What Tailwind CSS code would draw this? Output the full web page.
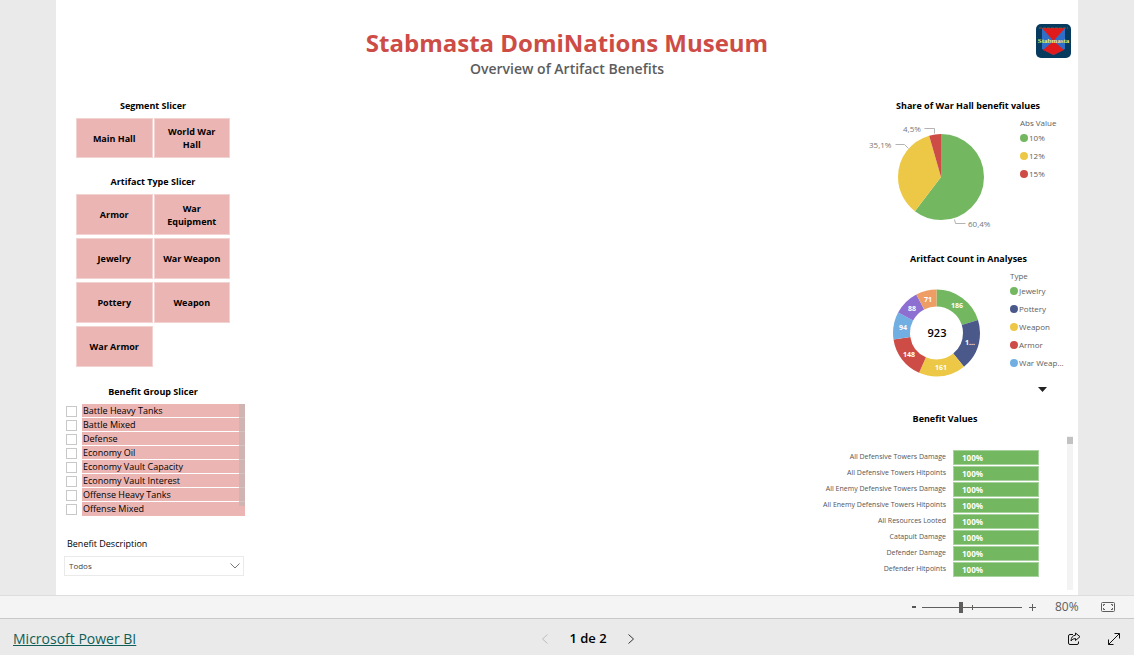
<!DOCTYPE html>
<html lang="en">
<head>
<meta charset="utf-8">
<title>Stabmasta DomiNations Museum</title>
<script src="https://cdn.jsdelivr.net/npm/@tailwindcss/browser@4"></script>
</head>
<body class="flex min-h-screen flex-col bg-[#eaeaea] font-['Open_Sans','Noto_Sans',sans-serif] text-black">

<main class="mx-14 flex flex-1 flex-col bg-white">
  <header class="relative pt-7 text-center">
    <h1 class="text-[24px] leading-[30px] font-bold text-[#cd4c46]">Stabmasta DomiNations Museum</h1>
    <p class="mt-[3px] text-[14px] leading-4 font-semibold text-[#5c5c5c]">Overview of Artifact Benefits</p>
    <svg class="absolute top-6 right-[7px] h-[34px] w-[35px]" viewBox="0 0 35 34" role="img" aria-label="Stabmasta logo">
      <rect width="35" height="34" rx="5" fill="#063a5f"/>
      <path d="M6 4H29V25L17.500 31L6 25Z" fill="#2f6fc8"/>
      <path d="M6 4H29L17.500 17Z" fill="#e01a1a"/>
      <path d="M17.500 17L28 26L17.500 31L7 26Z" fill="#e01a1a"/>
      <path d="M3 4H32" stroke="#7b5a35" stroke-dasharray="3 1"/>
      <text x="17.500" y="19" text-anchor="middle" font-family="Liberation Serif, serif" font-weight="bold" font-size="7" fill="#f3ea6b">Stabmasta</text>
    </svg>
  </header>

  <div class="flex flex-1 justify-between pt-[21px]">
    <aside class="ml-2 w-[180px]">
      <section>
        <h2 class="pr-[2px] text-center text-[9px] leading-4 font-bold">Segment Slicer</h2>
        <div class="mr-[14px] ml-3 mt-1 grid grid-cols-2 gap-x-px gap-y-[3px] text-[9px] leading-[13px] font-bold">
          <button class="h-10 border border-[#f3d3d2] bg-[#eab5b3] px-3">Main Hall</button>
          <button class="h-10 border border-[#f3d3d2] bg-[#eab5b3] px-3">World War Hall</button>
        </div>
      </section>
      <section class="mt-4">
        <h2 class="pr-[2px] text-center text-[9px] leading-4 font-bold">Artifact Type Slicer</h2>
        <div class="mr-[14px] ml-3 mt-1 grid grid-cols-2 gap-x-px gap-y-[3px] text-[9px] leading-[13px] font-bold">
          <button class="h-[41px] border border-[#f3d3d2] bg-[#eab5b3] px-1">Armor</button>
          <button class="h-[41px] border border-[#f3d3d2] bg-[#eab5b3] px-1">War<br>Equipment</button>
          <button class="h-[41px] border border-[#f3d3d2] bg-[#eab5b3] px-1">Jewelry</button>
          <button class="h-[41px] border border-[#f3d3d2] bg-[#eab5b3] px-1">War Weapon</button>
          <button class="h-[41px] border border-[#f3d3d2] bg-[#eab5b3] px-1">Pottery</button>
          <button class="h-[41px] border border-[#f3d3d2] bg-[#eab5b3] px-1">Weapon</button>
          <button class="h-[41px] border border-[#f3d3d2] bg-[#eab5b3] px-1">War Armor</button>
        </div>
      </section>
      <section class="mt-[17px]">
        <h2 class="pr-[2px] text-center text-[9px] leading-4 font-bold">Benefit Group Slicer</h2>
        <div class="relative mt-1 -mr-px text-[9px] leading-[14px]">
          <label class="flex h-[14px] items-center gap-[5px] pl-[2px]"><input type="checkbox" class="size-[11px] appearance-none border border-[#c8c8c8] bg-white"><span class="flex-1 border-b border-white bg-[#eab5b3] h-[14px] pl-px">Battle Heavy Tanks</span></label>
          <label class="flex h-[14px] items-center gap-[5px] pl-[2px]"><input type="checkbox" class="size-[11px] appearance-none border border-[#c8c8c8] bg-white"><span class="flex-1 border-b border-white bg-[#eab5b3] h-[14px] pl-px">Battle Mixed</span></label>
          <label class="flex h-[14px] items-center gap-[5px] pl-[2px]"><input type="checkbox" class="size-[11px] appearance-none border border-[#c8c8c8] bg-white"><span class="flex-1 border-b border-white bg-[#eab5b3] h-[14px] pl-px">Defense</span></label>
          <label class="flex h-[14px] items-center gap-[5px] pl-[2px]"><input type="checkbox" class="size-[11px] appearance-none border border-[#c8c8c8] bg-white"><span class="flex-1 border-b border-white bg-[#eab5b3] h-[14px] pl-px">Economy Oil</span></label>
          <label class="flex h-[14px] items-center gap-[5px] pl-[2px]"><input type="checkbox" class="size-[11px] appearance-none border border-[#c8c8c8] bg-white"><span class="flex-1 border-b border-white bg-[#eab5b3] h-[14px] pl-px">Economy Vault Capacity</span></label>
          <label class="flex h-[14px] items-center gap-[5px] pl-[2px]"><input type="checkbox" class="size-[11px] appearance-none border border-[#c8c8c8] bg-white"><span class="flex-1 border-b border-white bg-[#eab5b3] h-[14px] pl-px">Economy Vault Interest</span></label>
          <label class="flex h-[14px] items-center gap-[5px] pl-[2px]"><input type="checkbox" class="size-[11px] appearance-none border border-[#c8c8c8] bg-white"><span class="flex-1 border-b border-white bg-[#eab5b3] h-[14px] pl-px">Offense Heavy Tanks</span></label>
          <label class="flex h-[14px] items-center gap-[5px] pl-[2px]"><input type="checkbox" class="size-[11px] appearance-none border border-[#c8c8c8] bg-white"><span class="flex-1 bg-[#eab5b3] h-[14px] pl-px">Offense Mixed</span></label>
          <div class="absolute top-0 right-0 h-[102px] w-[6px] bg-[#c8b4b2]/80"></div>
        </div>
      </section>
      <section class="mt-5">
        <label for="benefit" class="block pl-[3px] text-[9px] leading-4">Benefit Description</label>
        <div class="relative mt-1">
          <select id="benefit" class="block h-5 w-full appearance-none border border-[#eaeaea] bg-white pl-1 text-[8px] text-[#444]"><option>Todos</option></select>
          <svg class="pointer-events-none absolute top-[7px] right-1 h-[6px] w-[10px]" viewBox="0 0 10 6" fill="none" stroke="#777"><path d="M.5 .5L5 5L9.500 .5"/></svg>
        </div>
      </section>
    </aside>

    <aside class="w-[264px]">
      <section class="pl-[46px]">
        <h2 class="pr-[2px] text-center text-[9px] leading-4 font-bold">Share of War Hall benefit values</h2>
        <div class="mt-1 flex gap-[10px]">
          <svg class="h-[120px] w-[150px]" viewBox="0 0 150 120" role="img" aria-label="Pie chart of War Hall benefit values">
            <g fill="none" stroke-width="43" transform="rotate(-90 81 59)">
              <circle cx="81" cy="59" r="21.500" stroke="#73b761" pathLength="1000" stroke-dasharray="604 396"/>
              <circle cx="81" cy="59" r="21.500" stroke="#ecc846" pathLength="1000" stroke-dasharray="351 649" stroke-dashoffset="-604"/>
              <circle cx="81" cy="59" r="21.500" stroke="#cd4c46" pathLength="1000" stroke-dasharray="45 955" stroke-dashoffset="-955"/>
            </g>
            <g fill="none" stroke="#b3b3b3"><path d="M64.500 10.500H74.500V15.500"/><path d="M35.500 26.500H44.500L48.500 30.500"/><path d="M94.500 101.500L95.500 105.500H105.500"/></g>
            <g font-size="8" fill="#777"><text x="43" y="14">4,5%</text><text x="9" y="30">35,1%</text><text x="108" y="109">60,4%</text></g>
          </svg>
          <div class="text-[8px] leading-[18px] text-[#605e5c]">
            <h3 class="leading-[10px]">Abs Value</h3>
            <ul class="mt-px">
              <li class="flex items-center gap-px"><span class="size-2 rounded-full bg-[#73b761]"></span>10%</li>
              <li class="flex items-center gap-px"><span class="size-2 rounded-full bg-[#ecc846]"></span>12%</li>
              <li class="flex items-center gap-px"><span class="size-2 rounded-full bg-[#cd4c46]"></span>15%</li>
            </ul>
          </div>
        </div>
      </section>

      <section class="mt-[13px] pl-[46px]">
        <h2 class="pr-px text-center text-[9px] leading-4 font-bold">Aritfact Count in Analyses</h2>
        <div class="mt-1 flex">
          <svg class="h-[124px] w-[150px]" viewBox="0 0 150 124" role="img" aria-label="Donut chart of artifact count by type">
            <g fill="none" stroke-width="17" transform="rotate(-90 76.500 62)">
              <circle cx="76.500" cy="62" r="35" stroke="#73b761" pathLength="923" stroke-dasharray="186 737"/>
              <circle cx="76.500" cy="62" r="35" stroke="#4a588a" pathLength="923" stroke-dasharray="175 748" stroke-dashoffset="-186"/>
              <circle cx="76.500" cy="62" r="35" stroke="#ecc846" pathLength="923" stroke-dasharray="161 762" stroke-dashoffset="-361"/>
              <circle cx="76.500" cy="62" r="35" stroke="#cd4c46" pathLength="923" stroke-dasharray="148 775" stroke-dashoffset="-522"/>
              <circle cx="76.500" cy="62" r="35" stroke="#71afe2" pathLength="923" stroke-dasharray="94 829" stroke-dashoffset="-670"/>
              <circle cx="76.500" cy="62" r="35" stroke="#8d6fd1" pathLength="923" stroke-dasharray="88 835" stroke-dashoffset="-764"/>
              <circle cx="76.500" cy="62" r="35" stroke="#ee9e64" pathLength="923" stroke-dasharray="71 852" stroke-dashoffset="-852"/>
            </g>
            <g font-size="7" font-weight="bold" fill="#fff" text-anchor="middle">
              <text x="97" y="37">186</text><text x="110" y="74">1...</text><text x="81" y="99">161</text><text x="49" y="86">148</text><text x="43" y="59">94</text><text x="52" y="40">88</text><text x="68" y="31">71</text>
            </g>
            <text x="77" y="66" font-size="11" font-weight="600" text-anchor="middle">923</text>
          </svg>
          <div class="text-[8px] leading-[18px] text-[#605e5c]">
            <h3 class="leading-[10px]">Type</h3>
            <ul class="mt-px">
              <li class="flex items-center gap-px"><span class="size-2 rounded-full bg-[#73b761]"></span>Jewelry</li>
              <li class="flex items-center gap-px"><span class="size-2 rounded-full bg-[#4a588a]"></span>Pottery</li>
              <li class="flex items-center gap-px"><span class="size-2 rounded-full bg-[#ecc846]"></span>Weapon</li>
              <li class="flex items-center gap-px"><span class="size-2 rounded-full bg-[#cd4c46]"></span>Armor</li>
              <li class="flex items-center gap-px"><span class="size-2 rounded-full bg-[#71afe2]"></span>War Weap...</li>
            </ul>
            <button aria-label="More types" class="mt-1 ml-7 block h-[18px]"><svg class="mt-2 h-[5px] w-[9px]" viewBox="0 0 9 5"><path d="M0 0H9L4.500 5Z" fill="#222"/></svg></button>
          </div>
        </div>
      </section>

      <section class="mt-4">
        <h2 class="pr-[2px] text-center text-[9px] leading-4 font-bold">Benefit Values</h2>
        <div class="mt-[9px] flex h-[154px]">
          <table class="mt-[13px] h-[128px] w-[225px] border-collapse text-[7px] leading-[14px]">
            <tbody>
              <tr class="h-4"><th class="p-0 pr-[7px] text-right font-normal whitespace-nowrap text-[#555]">All Defensive Towers Damage</th><td class="w-[86px] p-0"><div class="h-[15px] border border-[#a9d39e] bg-[#73b761] pl-2 text-[8px] font-bold text-white">100%</div></td></tr>
              <tr class="h-4"><th class="p-0 pr-[7px] text-right font-normal whitespace-nowrap text-[#555]">All Defensive Towers Hitpoints</th><td class="w-[86px] p-0"><div class="h-[15px] border border-[#a9d39e] bg-[#73b761] pl-2 text-[8px] font-bold text-white">100%</div></td></tr>
              <tr class="h-4"><th class="p-0 pr-[7px] text-right font-normal whitespace-nowrap text-[#555]">All Enemy Defensive Towers Damage</th><td class="w-[86px] p-0"><div class="h-[15px] border border-[#a9d39e] bg-[#73b761] pl-2 text-[8px] font-bold text-white">100%</div></td></tr>
              <tr class="h-4"><th class="p-0 pr-[7px] text-right font-normal whitespace-nowrap text-[#555]">All Enemy Defensive Towers Hitpoints</th><td class="w-[86px] p-0"><div class="h-[15px] border border-[#a9d39e] bg-[#73b761] pl-2 text-[8px] font-bold text-white">100%</div></td></tr>
              <tr class="h-4"><th class="p-0 pr-[7px] text-right font-normal whitespace-nowrap text-[#555]">All Resources Looted</th><td class="w-[86px] p-0"><div class="h-[15px] border border-[#a9d39e] bg-[#73b761] pl-2 text-[8px] font-bold text-white">100%</div></td></tr>
              <tr class="h-4"><th class="p-0 pr-[7px] text-right font-normal whitespace-nowrap text-[#555]">Catapult Damage</th><td class="w-[86px] p-0"><div class="h-[15px] border border-[#a9d39e] bg-[#73b761] pl-2 text-[8px] font-bold text-white">100%</div></td></tr>
              <tr class="h-4"><th class="p-0 pr-[7px] text-right font-normal whitespace-nowrap text-[#555]">Defender Damage</th><td class="w-[86px] p-0"><div class="h-[15px] border border-[#a9d39e] bg-[#73b761] pl-2 text-[8px] font-bold text-white">100%</div></td></tr>
              <tr class="h-4"><th class="p-0 pr-[7px] text-right font-normal whitespace-nowrap text-[#555]">Defender Hitpoints</th><td class="w-[86px] p-0"><div class="h-[15px] border border-[#a9d39e] bg-[#73b761] pl-2 text-[8px] font-bold text-white">100%</div></td></tr>
            </tbody>
          </table>
          <div class="ml-7 w-[6px] bg-[#f3f3f3]"><div class="mt-px h-[7px] bg-[#c2c2c2]"></div></div>
        </div>
      </section>
    </aside>
  </div>
</main>

<div class="flex h-6 items-center justify-end border-t border-b border-t-[#dedede] border-b-[#c8c8c8] bg-[#f4f4f4] pr-[19px] text-[#605e5c]">
  <button aria-label="Zoom out" class="flex h-5 w-4 items-center justify-center"><svg class="h-3 w-2" viewBox="0 0 8 12"><path d="M2 6H6" stroke="#555" stroke-width="2"/></svg></button>
  <div class="relative flex w-[100px] items-center">
    <input type="range" aria-label="Zoom" min="0" max="100" value="39" class="h-[11px] w-full appearance-none bg-transparent [&::-webkit-slider-runnable-track]:h-px [&::-webkit-slider-runnable-track]:bg-[#605e5c] [&::-webkit-slider-thumb]:mt-[-5px] [&::-webkit-slider-thumb]:h-[11px] [&::-webkit-slider-thumb]:w-1 [&::-webkit-slider-thumb]:appearance-none [&::-webkit-slider-thumb]:bg-[#605e5c]">
    <span class="absolute left-1/2 h-[5px] w-px bg-[#605e5c]"></span>
  </div>
  <button aria-label="Zoom in" class="flex h-5 w-5 items-center justify-center"><svg class="h-[9px] w-[9px]" viewBox="0 0 9 9"><path d="M1 4.500H8M4.500 1V8" stroke="#605e5c"/></svg></button>
  <span class="ml-[13px] w-7 text-[12px] leading-4">80%</span>
  <button aria-label="Fit to page" class="ml-[18px] flex h-5 items-center"><svg class="h-[10px] w-[14px]" viewBox="0 0 14 10" fill="none" stroke="#605e5c"><rect x=".5" y=".5" width="13" height="9" rx="1"/><path d="M2.500 4V2.500H4M10 2.500H11.500V4M11.500 6V7.500H10M4 7.500H2.500V6"/></svg></button>
</div>

<footer class="grid h-9 grid-cols-3 items-center px-[13px] pt-[3px]">
  <a href="#" class="justify-self-start text-[14px] leading-5 text-[#0f5f58] underline">Microsoft Power BI</a>
  <nav class="flex items-center justify-self-center pl-[42px] text-[13px] font-semibold">
    <button aria-label="Previous page" disabled class="mr-[21px]"><svg class="h-[10px] w-[6px]" viewBox="0 0 6 10" fill="none" stroke="#bdbdbd"><path d="M5.500 .5L.5 5L5.500 9.500"/></svg></button>
    <span>1 de 2</span>
    <button aria-label="Next page" class="ml-[21px]"><svg class="h-[10px] w-[6px]" viewBox="0 0 6 10" fill="none" stroke="#333"><path d="M.5 .5L5.500 5L.5 9.500"/></svg></button>
  </nav>
  <div class="flex items-center gap-[26px] justify-self-end">
    <button aria-label="Share"><svg class="size-[14px]" viewBox="0 0 14 14" fill="none" stroke="#111" stroke-linejoin="round"><path d="M6 2.500H3Q1.500 2.500 1.500 4V11Q1.500 12.500 3 12.500H10Q11.500 12.500 11.500 11V9.500"/><path d="M8.500 1L13 4.700L8.500 8.500V6.500Q5.500 6.500 4 9Q4.300 3.500 8.500 3.200Z"/></svg></button>
    <button aria-label="Full screen"><svg class="size-[14px]" viewBox="0 0 14 14" fill="none" stroke="#111"><path d="M1.500 12.500L12.500 1.500M7.500 1.500H12.500V6.500M1.500 7.500V12.500H6.500"/></svg></button>
  </div>
</footer>
</body>
</html>
